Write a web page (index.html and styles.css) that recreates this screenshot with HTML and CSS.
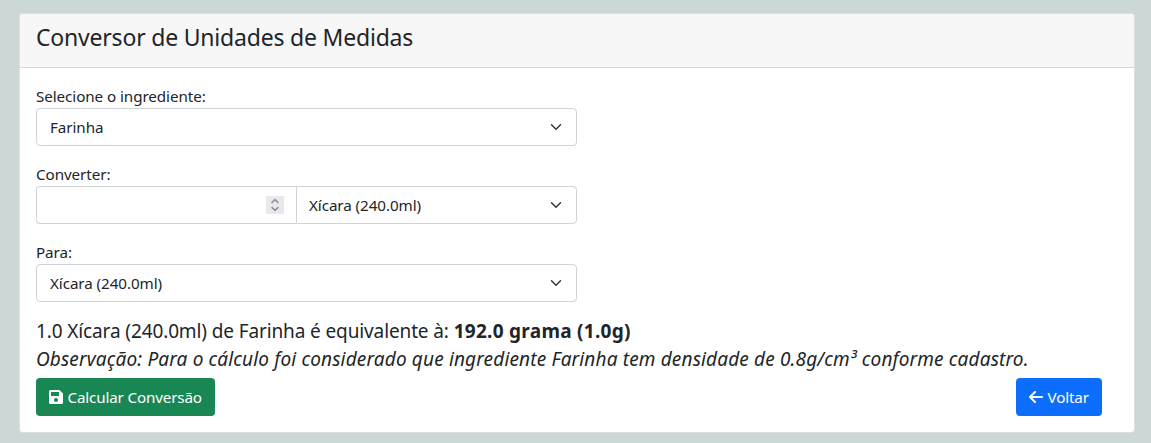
FILE: index.html
```html
<!DOCTYPE html>
<html lang="pt-BR">
<head>
<meta charset="utf-8">
<title>Conversor de Unidades de Medidas</title>
<link rel="stylesheet" href="styles.css">
</head>
<body>
<main class="card">
  <header class="card-header"><h1 class="card-title">Conversor de Unidades de Medidas</h1></header>
  <form class="card-body">
    <div class="field">
      <label class="label" for="ingrediente"><span>Selecione o ingrediente:</span></label>
      <select class="select" id="ingrediente"><option>Farinha</option></select>
    </div>
    <div class="field">
      <label class="label" for="quantidade"><span>Converter:</span></label>
      <div class="group">
        <div class="number">
          <input class="number-input" id="quantidade" inputmode="decimal">
          <span class="spinner"><svg width="18" height="18" viewBox="0 0 18 18"><path d="M5.600 6.800 9 3.700l3.400 3.100M5.600 11.200 9 14.300l3.400-3.100"/></svg></span>
        </div>
        <select class="select select-unit" aria-label="Unidade"><option>Xícara (240.0ml)</option></select>
      </div>
    </div>
    <div class="field">
      <label class="label" for="destino"><span>Para:</span></label>
      <select class="select" id="destino"><option>Xícara (240.0ml)</option></select>
    </div>
    <div class="result">
      <p class="line"><span class="sum">1.0 Xícara (240.0ml) de Farinha é equivalente à: </span><strong class="total">192.0 grama (1.0g)</strong></p>
      <p class="line note"><span>Observação: Para o cálculo foi considerado que ingrediente Farinha tem densidade de 0.8g/cm³ conforme cadastro.</span></p>
    </div>
    <div class="actions">
      <button class="btn btn-success" type="button">
        <svg class="icon" viewBox="0 0 448 512"><path d="M433.9 129.9l-83.9-83.9A48 48 0 0 0 316.1 32H48C21.5 32 0 53.500 0 80v352c0 26.500 21.500 48 48 48h352c26.500 0 48-21.500 48-48V163.900a48 48 0 0 0-14.100-34zM224 416c-35.300 0-64-28.700-64-64s28.700-64 64-64 64 28.700 64 64-28.700 64-64 64zm96-304.500V212c0 6.600-5.400 12-12 12H76c-6.600 0-12-5.400-12-12V108c0-6.600 5.400-12 12-12h228.500c3.200 0 6.200 1.300 8.500 3.500l3.500 3.500A12 12 0 0 1 320 111.500z"/></svg>
        <span>Calcular Conversão</span>
      </button>
      <button class="btn btn-primary" type="button">
        <svg class="icon" viewBox="0 0 448 512"><path d="M9.400 233.400c-12.500 12.500-12.500 32.800 0 45.300l160 160c12.500 12.500 32.800 12.500 45.300 0s12.500-32.800 0-45.300L109.200 288H416c17.700 0 32-14.300 32-32s-14.300-32-32-32H109.300l105.300-105.400c12.500-12.500 12.500-32.800 0-45.300s-32.800-12.500-45.300 0z"/></svg>
        <span>Voltar</span>
      </button>
    </div>
  </form>
</main>
</body>
</html>
```
FILE: styles.css
```css
* { box-sizing: border-box; }
body {
  margin: 0;
  padding: 13px 16px 10px 19px;
  background: #ccd8d8;
  color: #212529;
  font: 15.2px/24px "Noto Sans", "Open Sans", sans-serif;
  letter-spacing: -0.07px;
}
.card {
  height: 420px;
  background: #fff;
  border: 1px solid #dfdfdf;
  border-radius: 4px;
}
.card-header {
  height: 54px;
  padding: 8px 16px;
  background: #f7f7f7;
  border-bottom: 1px solid #d8d8d8;
  border-radius: 3px 3px 0 0;
}
.card-title { margin: 0; font-size: 23px; font-weight: 400; line-height: 30px; letter-spacing: -0.2px; }
.card-body { padding: 16px; }
.field { width: 541px; margin-bottom: 16px; }
.label { display: block; height: 24px; }
.select, .number-input {
  display: block;
  width: 100%;
  height: 38px;
  border: 1px solid #ced4da;
  border-radius: 4px;
  background-color: #fff;
  color: #212529;
  font: inherit;
  letter-spacing: inherit;
}
.select {
  appearance: none;
  padding: 0 36px 0 13px;
  background: #fff url("data:image/svg+xml,%3Csvg xmlns='http://www.w3.org/2000/svg' viewBox='0 0 16 16'%3E%3Cpath fill='none' stroke='%23343a40' stroke-linecap='round' stroke-linejoin='round' stroke-width='2' d='M2 5l6 6 6-6'/%3E%3C/svg%3E") no-repeat right 12px center / 16px 12px;
}
.group { display: grid; grid-template-columns: 260px 281px; }
.number { position: relative; }
.number-input { padding: 0 36px 0 13px; border-right: 0; border-radius: 4px 0 0 4px; }
.spinner { position: absolute; top: 10px; right: 12px; width: 18px; height: 18px; background: #e9e9ed; }
.spinner svg { display: block; fill: none; stroke: #9090a0; stroke-width: 1.7; }
.select-unit { padding-left: 12px; border-radius: 0 4px 4px 0; }
.result { height: 61px; margin-top: -1px; font-size: 19px; line-height: 28px; white-space: nowrap; }
.line { margin: 0; }
.sum { letter-spacing: -0.12px; }
.total { letter-spacing: 0.28px; }
.note { font-style: italic; letter-spacing: 0.155px; }
.actions { display: flex; justify-content: space-between; padding-right: 16px; }
.btn {
  display: flex;
  align-items: center;
  gap: 4.5px;
  height: 38px;
  padding: 0 13px;
  border: 0;
  border-radius: 4px;
  color: #fff;
  font: inherit;
  letter-spacing: -0.15px;
  white-space: nowrap;
}
.btn-success { width: 179px; background: #198754; }
.btn-primary { width: 86px; background: #0d6efd; }
.icon { flex: none; width: 14px; height: 16px; fill: currentColor; }
```
